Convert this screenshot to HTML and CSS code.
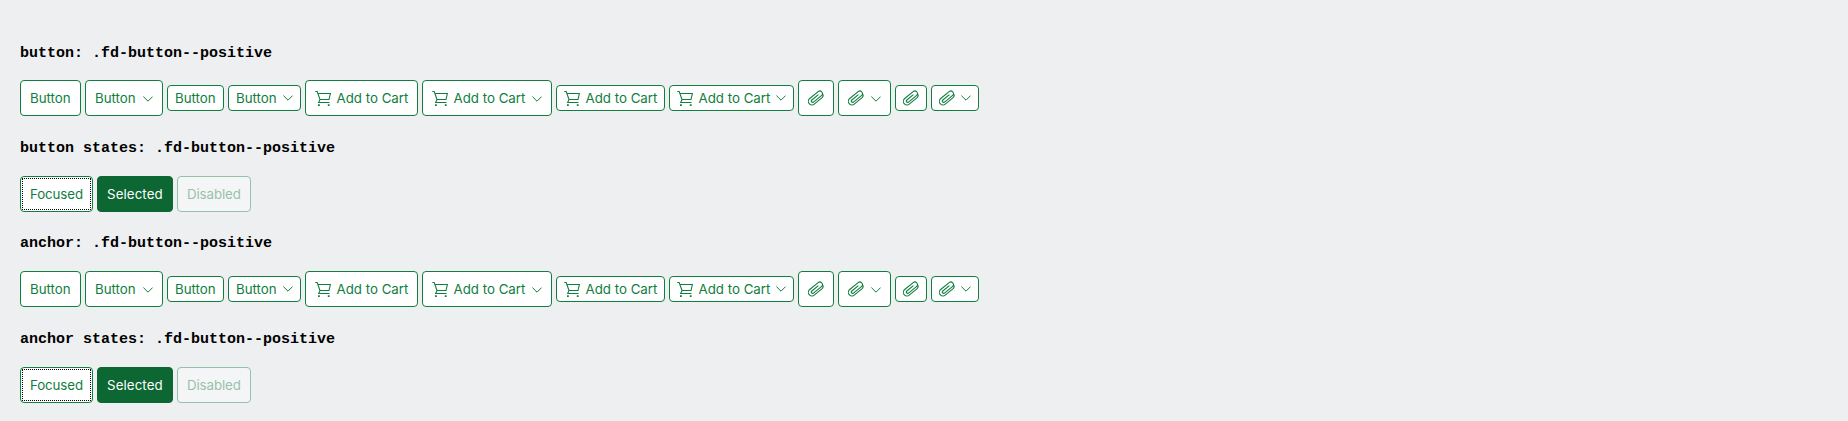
FILE: index.html
```
<!DOCTYPE html>
<html lang="en">
<head>
<meta charset="utf-8">
<title>Positive buttons</title>
<link rel="stylesheet" href="styles.css">
</head>
<body>
<svg class="sprite" aria-hidden="true">
  <symbol id="cart" viewBox="0 0 16 16"><path d="M.3 1.500h1.900L5 9.500 3.700 12.500h10.800M2.900 3.500h12.500L14 9.500H5"/><path class="solid" d="M3 14.200h1.800V16H3zM12.800 14.200h1.800V16h-1.800z"/></symbol>
  <symbol id="clip" viewBox="0 0 16 16"><path transform="translate(8 8) rotate(-39)" d="M5 3.600H-5.200A3.600 3.600 0 0 1-5.200-3.600H5.700A2.600 2.600 0 0 1 5.700 1.600H-4.500A1.300 1.300 0 0 1-4.500-1.100H4M5 3.600A3.600 3.600 0 0 0 7.800 1.600"/></symbol>
  <symbol id="down" viewBox="0 0 10 6"><path d="M.4.6 5 5.200 9.600.6"/></symbol>
</svg>
<main class="page">
  <h4 class="title first">button: .fd-button--positive</h4>
  <div class="row">
    <button class="btn w61">Button</button>
    <button class="btn w78">Button<svg class="down"><use href="#down"/></svg></button>
    <button class="btn compact w57">Button</button>
    <button class="btn compact w73">Button<svg class="down"><use href="#down"/></svg></button>
    <button class="btn w113"><svg class="icon"><use href="#cart"/></svg><span class="cart-text">Add to Cart</span></button>
    <button class="btn w130"><svg class="icon"><use href="#cart"/></svg><span class="cart-text">Add to Cart</span><svg class="down"><use href="#down"/></svg></button>
    <button class="btn compact w109"><svg class="icon"><use href="#cart"/></svg><span class="cart-text">Add to Cart</span></button>
    <button class="btn compact w125"><svg class="icon"><use href="#cart"/></svg><span class="cart-text">Add to Cart</span><svg class="down"><use href="#down"/></svg></button>
    <button class="btn w36" aria-label="Attach"><svg class="icon"><use href="#clip"/></svg></button>
    <button class="btn w53" aria-label="Attach"><svg class="icon"><use href="#clip"/></svg><svg class="down"><use href="#down"/></svg></button>
    <button class="btn compact w32" aria-label="Attach"><svg class="icon"><use href="#clip"/></svg></button>
    <button class="btn compact w48" aria-label="Attach"><svg class="icon"><use href="#clip"/></svg><svg class="down"><use href="#down"/></svg></button>
  </div>
  <h4 class="title">button states: .fd-button--positive</h4>
  <div class="row">
    <button class="btn w73 focused">Focused</button>
    <button class="btn w76 selected">Selected</button>
    <button class="btn w74 disabled" disabled>Disabled</button>
  </div>
  <h4 class="title anchors">anchor: .fd-button--positive</h4>
  <div class="row">
    <a class="btn w61">Button</a>
    <a class="btn w78">Button<svg class="down"><use href="#down"/></svg></a>
    <a class="btn compact w57">Button</a>
    <a class="btn compact w73">Button<svg class="down"><use href="#down"/></svg></a>
    <a class="btn w113"><svg class="icon"><use href="#cart"/></svg><span class="cart-text">Add to Cart</span></a>
    <a class="btn w130"><svg class="icon"><use href="#cart"/></svg><span class="cart-text">Add to Cart</span><svg class="down"><use href="#down"/></svg></a>
    <a class="btn compact w109"><svg class="icon"><use href="#cart"/></svg><span class="cart-text">Add to Cart</span></a>
    <a class="btn compact w125"><svg class="icon"><use href="#cart"/></svg><span class="cart-text">Add to Cart</span><svg class="down"><use href="#down"/></svg></a>
    <a class="btn w36" aria-label="Attach"><svg class="icon"><use href="#clip"/></svg></a>
    <a class="btn w53" aria-label="Attach"><svg class="icon"><use href="#clip"/></svg><svg class="down"><use href="#down"/></svg></a>
    <a class="btn compact w32" aria-label="Attach"><svg class="icon"><use href="#clip"/></svg></a>
    <a class="btn compact w48" aria-label="Attach"><svg class="icon"><use href="#clip"/></svg><svg class="down"><use href="#down"/></svg></a>
  </div>
  <h4 class="title">anchor states: .fd-button--positive</h4>
  <div class="row">
    <a class="btn w73 focused">Focused</a>
    <a class="btn w76 selected">Selected</a>
    <a class="btn w74 disabled">Disabled</a>
  </div>
</main>
</body>
</html>
```

FILE: styles.css
```
body {
  margin: 0;
  background: #edeff0;
}
.sprite { display: none; }
.page { padding: 23px 20px 0; }
.title {
  margin: 0;
  height: 60px;
  box-sizing: border-box;
  padding-top: 24px;
  font: bold 15px/17px "Liberation Mono", monospace;
  color: #000;
}
.title.first { height: 57px; padding-top: 22px; }
.title.anchors { height: 59px; padding-top: 23px; }
.row {
  display: flex;
  align-items: center;
  gap: 4px;
  height: 36px;
}
.btn {
  position: relative;
  display: flex;
  align-items: center;
  box-sizing: border-box;
  flex: none;
  height: 36px;
  margin: 0;
  padding: 0 9px;
  border: 1px solid #107e3e;
  border-radius: 4px;
  background: #fff;
  color: #107e3e;
  font: 13.3px/16px Inter, sans-serif;
  white-space: nowrap;
}
.compact { height: 26px; padding: 0 7px; }
.icon { width: 16px; height: 16px; flex: none; }
.down { width: 10px; height: 6px; margin: 2px 0 0 auto; flex: none; }
.compact .down { margin-top: 0; }
.icon, .down { fill: none; stroke: #107e3e; }
.icon { stroke-width: 1.1; }
.down { stroke-width: 1; }
.solid { fill: #107e3e; stroke: none; }
.cart-text { margin-left: 5.5px; }
.focused { letter-spacing: -.1px; }
.focused::after {
  content: "";
  position: absolute;
  inset: 1px;
  border: 1px dotted #000;
}
.selected { background: #0d6733; border-color: #0d6733; color: #fff; letter-spacing: .1px; }
.disabled { opacity: .4; letter-spacing: -.1px; }
.w32 { width: 32px; }
.w36 { width: 36px; }
.w48 { width: 48px; }
.w53 { width: 53px; }
.w57 { width: 57px; }
.w61 { width: 61px; }
.w73 { width: 73px; }
.w74 { width: 74px; }
.w76 { width: 76px; }
.w78 { width: 78px; }
.w109 { width: 109px; }
.w113 { width: 113px; }
.w125 { width: 125px; }
.w130 { width: 130px; }
```
